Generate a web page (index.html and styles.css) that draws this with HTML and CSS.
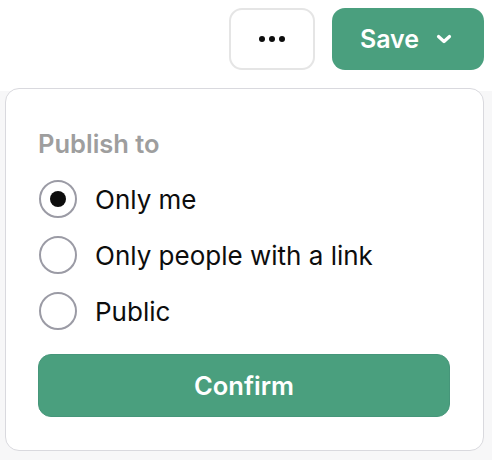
FILE: index.html
```html
<!DOCTYPE html>
<html>
<head>
    <title>Publish</title>
    <link rel="stylesheet" href="styles.css">
</head>
<body>
    <div class="topbar">
        <button class="more-btn" aria-label="More">
            <svg width="26" height="8" viewBox="0 0 26 8" fill="currentColor">
                <circle cx="3" cy="4" r="3"></circle>
                <circle cx="13" cy="4" r="3"></circle>
                <circle cx="23" cy="4" r="3"></circle>
            </svg>
        </button>
        <button class="save-btn">
            Save
            <svg width="16" height="10" viewBox="0 0 16 10" fill="none" stroke="currentColor" stroke-width="3.2" stroke-linecap="round" stroke-linejoin="round">
                <path d="M2.5 2.5l5.5 5 5.5-5"></path>
            </svg>
        </button>
    </div>

    <div class="publish-menu">
        <div class="menu-title">Publish to</div>
        <div class="options">
            <label class="option">
                <span class="radio checked"></span>
                Only me
            </label>
            <label class="option">
                <span class="radio"></span>
                Only people with a link
            </label>
            <label class="option">
                <span class="radio"></span>
                Public
            </label>
        </div>
        <button class="confirm-btn">Confirm</button>
    </div>
</body>
</html>
```

FILE: styles.css
```css
body {
    font-family: Inter, 'Liberation Sans', Arial, sans-serif;
    margin: 0;
    padding: 0;
    background-color: #f7f7f8;
    color: #0d0d0d;
    height: 100vh;
    overflow: hidden;
    position: relative;
}
button {
    font-family: inherit;
    cursor: pointer;
}
.topbar {
    height: 91px;
    box-sizing: border-box;
    background-color: #fff;
    display: flex;
    justify-content: flex-end;
    align-items: flex-start;
    gap: 17px;
    padding: 8px 8px 0 0;
}
.more-btn {
    width: 86px;
    height: 62px;
    background-color: #fff;
    border: 2px solid #e5e5e5;
    border-radius: 13px;
    color: #0d0d0d;
    display: flex;
    align-items: center;
    justify-content: center;
    padding: 0;
}
.save-btn {
    width: 152px;
    height: 62px;
    background-color: #4a9f7e;
    color: #fff;
    border: none;
    border-radius: 13px;
    font-size: 25px;
    font-weight: 600;
    display: flex;
    align-items: center;
    justify-content: center;
    gap: 17px;
    padding: 0 4px 0 0;
}
.publish-menu {
    position: absolute;
    top: 88px;
    left: 5px;
    width: 479px;
    height: 363px;
    box-sizing: border-box;
    background-color: #fff;
    border: 1.5px solid #d9d9de;
    border-radius: 14px;
    padding: 39px 33px 33px 32px;
    display: flex;
    flex-direction: column;
}
.menu-title {
    font-size: 25.5px;
    font-weight: 600;
    color: #9e9e9e;
    line-height: 32px;
    margin-bottom: 11px;
}
.options {
    display: flex;
    flex-direction: column;
}
.option {
    height: 56px;
    display: flex;
    align-items: center;
    gap: 18px;
    font-size: 26px;
    cursor: pointer;
}
.radio {
    width: 38px;
    height: 38px;
    box-sizing: border-box;
    border: 2px solid #9b9ba5;
    border-radius: 50%;
    display: flex;
    align-items: center;
    justify-content: center;
    margin-left: 1px;
}
.radio.checked::after {
    content: "";
    width: 16px;
    height: 16px;
    border-radius: 50%;
    background-color: #0d0d0d;
}
.confirm-btn {
    margin-top: auto;
    height: 63px;
    background-color: #4a9f7e;
    color: #fff;
    border: 1px solid #46967a;
    border-radius: 13px;
    font-size: 25.5px;
    font-weight: 600;
}
```
